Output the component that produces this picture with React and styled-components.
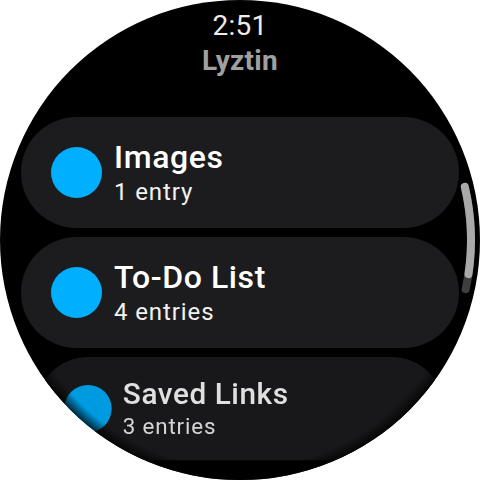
import React from "react";
import styled, { createGlobalStyle } from "styled-components";

const Global = createGlobalStyle`
  html, body { margin: 0; padding: 0; background: #ffffff; }
  body { font-family: Roboto, "Noto Sans", sans-serif; }
`;

const Screen = styled.div`
  position: relative;
  width: 480px;
  height: 480px;
  border-radius: 50%;
  overflow: hidden;
  background: #000000;
  display: flex;
  flex-direction: column;
  align-items: center;
`;

const Time = styled.div`
  margin-top: 10px;
  font-size: 28px;
  line-height: 32px;
  font-weight: 400;
  letter-spacing: 0.3px;
  color: #ececec;
`;

const AppTitle = styled.div`
  margin-top: 3px;
  font-size: 28px;
  line-height: 32px;
  font-weight: 700;
  letter-spacing: 0.3px;
  color: #a0a0a0;
`;

const List = styled.div`
  margin-top: 40px;
  width: 438px;
  display: flex;
  flex-direction: column;
  gap: 9px;
`;

const Card = styled.div`
  flex: none;
  height: 111px;
  border-radius: 56px;
  background: #1c1c1e;
  display: flex;
  align-items: center;
  gap: 12px;
  padding-left: 30px;
  box-sizing: border-box;
  transform: scale(${(p) => p.$scale});
  transform-origin: top center;
  opacity: ${(p) => p.$dim};
`;

const Dot = styled.div`
  width: 51px;
  height: 51px;
  border-radius: 50%;
  background: #00b0ff;
  flex: none;
`;

const Texts = styled.div`
  display: flex;
  flex-direction: column;
`;

const Title = styled.div`
  font-size: 32px;
  line-height: 36px;
  font-weight: 500;
  letter-spacing: 0.6px;
  color: #ffffff;
`;

const Sub = styled.div`
  margin-top: 3px;
  font-size: 24px;
  line-height: 28px;
  font-weight: 400;
  letter-spacing: 0.9px;
  color: #f2f2f2;
`;

const Vignette = styled.div`
  position: absolute;
  inset: 0;
  pointer-events: none;
  background: radial-gradient(circle closest-side at 50% 50%, rgba(0,0,0,0) 95%, rgba(0,0,0,0.75) 100%);
  -webkit-mask-image: linear-gradient(to bottom, transparent 68%, black 80%);
  mask-image: linear-gradient(to bottom, transparent 68%, black 80%);
`;

const Indicator = styled.svg`
  position: absolute;
  left: 0;
  top: 0;
  pointer-events: none;
`;

const items = [
  { title: "Images", sub: "1 entry", scale: 1, dim: 1 },
  { title: "To-Do List", sub: "4 entries", scale: 1, dim: 1 },
  { title: "Saved Links", sub: "3 entries", scale: 0.93, dim: 0.88 },
];

function arc(r, a0, a1) {
  const rad = (d) => (d * Math.PI) / 180;
  const x0 = 240 + r * Math.cos(rad(a0));
  const y0 = 240 + r * Math.sin(rad(a0));
  const x1 = 240 + r * Math.cos(rad(a1));
  const y1 = 240 + r * Math.sin(rad(a1));
  return `M ${x0} ${y0} A ${r} ${r} 0 0 1 ${x1} ${y1}`;
}

export default function App() {
  return (
    <>
      <Global />
      <Screen>
        <Time>2:51</Time>
        <AppTitle>Lyztin</AppTitle>
        <List>
          {items.map((it) => (
            <Card key={it.title} $scale={it.scale} $dim={it.dim}>
              <Dot />
              <Texts>
                <Title>{it.title}</Title>
                <Sub>{it.sub}</Sub>
              </Texts>
            </Card>
          ))}
        </List>
        <Vignette />
        <Indicator width="480" height="480" viewBox="0 0 480 480">
          <path d={arc(231, -13.3, 12.3)} stroke="#3e3e3e" strokeWidth="8" strokeLinecap="round" fill="none" />
          <path d={arc(231, -13.3, 8.5)} stroke="#a9a9a9" strokeWidth="8" strokeLinecap="round" fill="none" />
        </Indicator>
      </Screen>
    </>
  );
}
